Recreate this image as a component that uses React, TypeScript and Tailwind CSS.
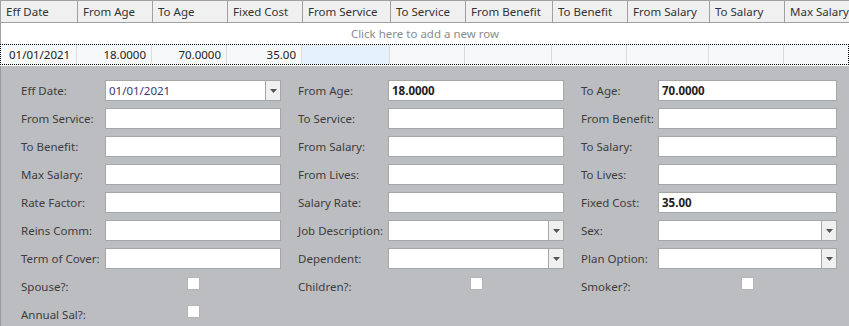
import { ReactNode } from 'react';

const columns = [
  { title: 'Eff Date', w: 77 },
  { title: 'From Age', w: 75 },
  { title: 'To Age', w: 75 },
  { title: 'Fixed Cost', w: 75 },
  { title: 'From Service', w: 88 },
  { title: 'To Service', w: 75 },
  { title: 'From Benefit', w: 87 },
  { title: 'To Benefit', w: 75 },
  { title: 'From Salary', w: 82 },
  { title: 'To Salary', w: 75 },
  { title: 'Max Salary', w: 70 },
];

const rowValues: Record<number, { v: string; right?: boolean }> = {
  0: { v: '01/01/2021' },
  1: { v: '18.0000', right: true },
  2: { v: '70.0000', right: true },
  3: { v: '35.00', right: true },
};

function TextBox({ value, bold }: { value?: string; bold?: boolean }) {
  return (
    <div className="h-[21px] flex-1 bg-white border border-[#a6a6a6] flex items-center px-[3px]">
      <span className={`text-[11.5px] ${bold ? 'font-bold text-[#222]' : 'text-[#3a3a70]'}`}>{value}</span>
    </div>
  );
}

function ComboBox({ value }: { value?: string }) {
  return (
    <div className="h-[21px] flex-1 bg-white border border-[#a6a6a6] flex items-stretch">
      <div className="flex-1 flex items-center px-[3px] text-[11.5px] text-[#3a3a70]">{value}</div>
      <div className="w-[15px] bg-[#f0f0f0] border-l border-[#a6a6a6] flex items-center justify-center">
        <svg width="7" height="4" viewBox="0 0 7 4">
          <path d="M0 0h7L3.5 4z" fill="#555" />
        </svg>
      </div>
    </div>
  );
}

function CheckBox() {
  return (
    <div className="flex-1 flex justify-center pt-[1px] self-start">
      <div className="w-[13px] h-[13px] bg-white border border-[#b5b5b5]" />
    </div>
  );
}

function Field({ label, labelW, children }: { label: string; labelW: string; children: ReactNode }) {
  return (
    <div className="flex h-[21px] items-center">
      <div className={`${labelW} shrink-0 text-[11.5px] text-[#3c3c3c] whitespace-nowrap self-center`}>{label}</div>
      {children}
    </div>
  );
}

function Column({ labelW, width, items }: { labelW: string; width: string; items: [string, ReactNode][] }) {
  return (
    <div className={`${width} flex flex-col gap-[7px]`}>
      {items.map(([label, node]) => (
        <Field key={label} label={label} labelW={labelW}>
          {node}
        </Field>
      ))}
    </div>
  );
}

export default function App() {
  return (
    <div
      className="w-[849px] h-[326px] flex flex-col bg-white overflow-hidden"
      style={{ fontFamily: '"Noto Sans", "Open Sans", sans-serif' }}
    >
      {/* grid header */}
      <div className="flex h-[23px] bg-[#f0f0f0] border-t border-b border-l border-[#a0a0a0] shrink-0">
        {columns.map((c) => (
          <div
            key={c.title}
            style={{ width: c.w }}
            className="shrink-0 border-r border-[#a0a0a0] px-[5px] flex items-center text-[11.5px] text-[#333] whitespace-nowrap overflow-hidden"
          >
            {c.title}
          </div>
        ))}
      </div>

      {/* new row */}
      <div className="h-[21px] shrink-0 border-l border-[#a0a0a0] flex items-center justify-center text-[11.5px] text-[#8c8c8c]">
        Click here to add a new row
      </div>

      {/* data row */}
      <div className="h-[21px] shrink-0 flex border border-dotted border-black bg-[#f7f8fa]">
        {columns.map((c, i) => {
          const cell = rowValues[i];
          return (
            <div
              key={c.title}
              style={{ width: i === 0 ? c.w - 1 : c.w }}
              className={`shrink-0 border-r border-[#dcdcdc] flex items-center px-[5px] text-[11.5px] text-[#222] ${
                cell?.right ? 'justify-end' : 'justify-start pl-[8px]'
              } ${i === 4 ? 'bg-[#e5f1fb]' : ''}`}
            >
              {cell?.v}
            </div>
          );
        })}
      </div>

      {/* detail form */}
      <div className="flex-1 mt-[1px] bg-[#bcbdc1] border-l border-[#9a9a9a] pl-[20px] pt-[14px] flex gap-[17px]">
        <Column
          width="w-[260px]"
          labelW="w-[84px]"
          items={[
            ['Eff Date:', <ComboBox value="01/01/2021" />],
            ['From Service:', <TextBox />],
            ['To Benefit:', <TextBox />],
            ['Max Salary:', <TextBox />],
            ['Rate Factor:', <TextBox />],
            ['Reins Comm:', <TextBox />],
            ['Term of Cover:', <TextBox />],
            ['Spouse?:', <CheckBox />],
            ['Annual Sal?:', <CheckBox />],
          ]}
        />
        <Column
          width="w-[266px]"
          labelW="w-[90px]"
          items={[
            ['From Age:', <TextBox value="18.0000" bold />],
            ['To Service:', <TextBox />],
            ['From Salary:', <TextBox />],
            ['From Lives:', <TextBox />],
            ['Salary Rate:', <TextBox />],
            ['Job Description:', <ComboBox />],
            ['Dependent:', <ComboBox />],
            ['Children?:', <CheckBox />],
          ]}
        />
        <Column
          width="w-[256px]"
          labelW="w-[77px]"
          items={[
            ['To Age:', <TextBox value="70.0000" bold />],
            ['From Benefit:', <TextBox />],
            ['To Salary:', <TextBox />],
            ['To Lives:', <TextBox />],
            ['Fixed Cost:', <TextBox value="35.00" bold />],
            ['Sex:', <ComboBox />],
            ['Plan Option:', <ComboBox />],
            ['Smoker?:', <CheckBox />],
          ]}
        />
      </div>
    </div>
  );
}
